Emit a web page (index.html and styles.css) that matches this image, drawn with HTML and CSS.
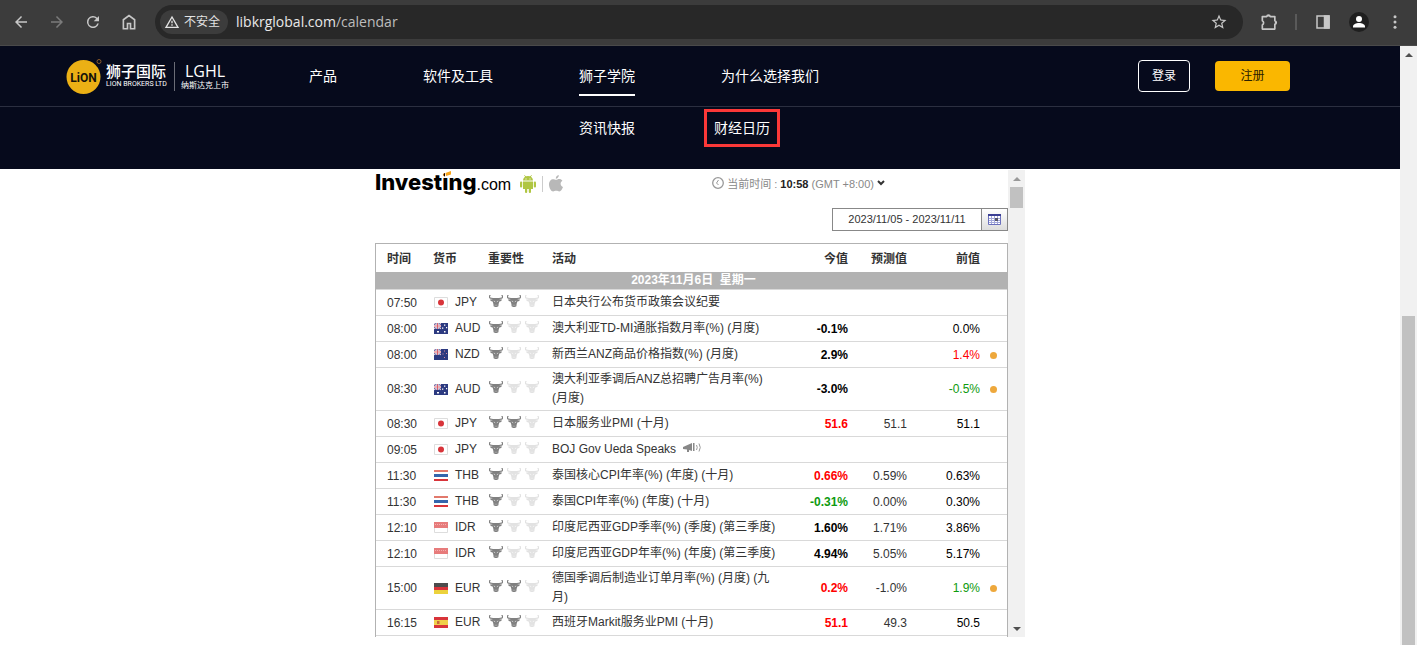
FILE: index.html
```html
<!DOCTYPE html>
<html lang="zh-CN">
<head>
<meta charset="utf-8">
<title>财经日历</title>
<link rel="stylesheet" href="styles.css">
</head>
<body>
<svg class="sprite" aria-hidden="true">
  <symbol id="bull" viewBox="0 0 14 12">
    <path d="M1.300 0C.2 1 0 2.600 1.300 3.200L4 3.500h6l2.700-.3C14 2.600 13.800 1 12.700 0" fill="none" stroke="currentColor" stroke-width="1.200"/>
    <path d="M4 3h6l.6 1.200 2.400.3-.8 1.500-1.800.5-.8 2.500-.2 2.200c-.9 1-3.900 1-4.800 0L4.400 9l-.8-2.500L1.800 6 1 4.500l2.400-.3z" fill="currentColor"/>
    <path d="M4.800 6l1.400.8M9.200 6l-1.400.8M5.800 10.200h.7M7.500 10.200h.7" stroke="#fff" stroke-width=".6" fill="none"/>
  </symbol>
  <symbol id="jpy" viewBox="0 0 16 11">
    <path d="M1.500.5h13v10h-13z" fill="#fff" stroke="#ddd"/><circle cx="8" cy="5.500" r="3" fill="#d8343a"/>
  </symbol>
  <symbol id="aud" viewBox="0 0 16 11">
    <path d="M1 0h14v11H1z" fill="#2c3a80"/><path d="M1 0h7v6H1z" fill="#6a74ad"/>
    <path d="M1 0l7 6M8 0L1 6" stroke="#e9c6d2"/><path d="M4.500 0v6M1 3h7" stroke="#fff" stroke-width="2"/><path d="M4.500 0v6M1 3h7" stroke="#d9606c"/>
    <path d="M4 8h2v1.500H4zM11 1.500h1.300v1.300H11zM9 4.500h1.300v1.300H9zM13 4h1.200v1.200H13zM11 8h1.500v1.500H11z" fill="#fff"/>
  </symbol>
  <symbol id="nzd" viewBox="0 0 16 11">
    <path d="M1 0h14v11H1z" fill="#2c3a80"/><path d="M1 0h7v6H1z" fill="#6a74ad"/>
    <path d="M1 0l7 6M8 0L1 6" stroke="#e9c6d2"/><path d="M4.500 0v6M1 3h7" stroke="#fff" stroke-width="2"/><path d="M4.500 0v6M1 3h7" stroke="#d9606c"/>
    <path d="M11 1.500h1v1h-1zM9.500 4.500h1v1h-1zM13 4h1v1h-1zM11 8h1v1h-1z" fill="#d98b9c"/>
  </symbol>
  <symbol id="thb" viewBox="0 0 16 11">
    <path d="M1 0h14v11H1z" fill="#fff"/><path d="M1 0h14v2H1z" fill="#e2796c"/><path d="M1 4h14v3H1z" fill="#3466ad"/><path d="M1 9h14v2H1z" fill="#d8343a"/>
  </symbol>
  <symbol id="idr" viewBox="0 0 16 11">
    <path d="M1.500.5h13v10h-13z" fill="#fff" stroke="#ddd"/><path d="M1 0h14v6H1z" fill="#e77b7b"/><path d="M2 2.500h12" stroke="#f3b0b0" stroke-dasharray="1 1"/>
  </symbol>
  <symbol id="deu" viewBox="0 0 16 11">
    <path d="M1 0h14v4H1z" fill="#4c4c4c"/><path d="M1 4h14v3H1z" fill="#d8343a"/><path d="M1 7h14v4H1z" fill="#ecd23c"/>
  </symbol>
  <symbol id="esp" viewBox="0 0 16 11">
    <path d="M1 0h14v11H1z" fill="#d8343a"/><path d="M1 3h14v5H1z" fill="#f0d04a"/><path d="M4 4h2.500v3H4z" fill="#c9683c"/>
  </symbol>
</svg>

<header class="toolbar">
  <button class="tool" aria-label="后退"><svg viewBox="0 0 24 24"><path d="M20 11H7.800l5.600-5.600L12 4l-8 8 8 8 1.400-1.400L7.800 13H20z"/></svg></button>
  <button class="tool dim" aria-label="前进" disabled><svg viewBox="0 0 24 24"><path d="M12 4l-1.400 1.400 5.600 5.600H4v2h12.200l-5.600 5.600L12 20l8-8z"/></svg></button>
  <button class="tool" aria-label="重新加载"><svg viewBox="0 0 24 24"><path d="M17.650 6.350A8 8 0 1 0 19.730 14h-2.080A6 6 0 1 1 12 6c1.660 0 3.140.69 4.220 1.780L13 11h7V4z"/></svg></button>
  <button class="tool" aria-label="主页"><svg viewBox="0 0 24 24"><path d="M4.500 9L12 3.500 19.500 9v12H14v-7h-4v7H4.500z" fill="none" stroke="currentColor" stroke-width="2.200"/></svg></button>
  <div class="omnibox">
    <button class="chip"><svg viewBox="0 0 24 24"><path d="M12 4.500L3 20h18z" fill="none" stroke="currentColor" stroke-width="2"/><path d="M11 10h2v4h-2zM11 15.500h2v2h-2z"/></svg>不安全</button>
    <div class="url" aria-label="地址">libkrglobal.com<span class="path">/calendar</span></div>
    <button class="star" aria-label="收藏"><svg viewBox="0 0 24 24"><path d="M22 9.240l-7.190-.62L12 2 9.190 8.630 2 9.240l5.460 4.730L5.820 21 12 17.270 18.180 21l-1.630-7.030zM12 15.400l-3.760 2.270 1-4.280-3.320-2.880 4.380-.38L12 6.100l1.710 4.040 4.380.38-3.320 2.880 1 4.280z"/></svg></button>
  </div>
  <button class="tool big" aria-label="扩展程序"><svg viewBox="0 0 24 24"><path d="M4 5.500h5.200a2.200 2.200 0 0 1 4.300 0H19v5a2.200 2.200 0 0 1 0 4.300V20.500H4v-5a2.800 2.800 0 0 0 0-5z" fill="none" stroke="currentColor" stroke-width="2" stroke-linejoin="round"/><path d="M9.500 5.500a1.900 1.900 0 0 1 3.800 0zM19 10.600a1.900 1.900 0 0 1 0 3.800z"/></svg></button>
  <span class="divider"></span>
  <button class="tool" aria-label="侧边栏"><svg viewBox="0 0 24 24"><path d="M4 4h16v16H4z" fill="none" stroke="currentColor" stroke-width="2"/><path d="M13 3h8v18h-8z"/></svg></button>
  <button class="tool big" aria-label="用户"><svg viewBox="0 0 20 20"><circle cx="10" cy="10" r="10" fill="#1f1f1f"/><circle cx="10" cy="7" r="3" fill="#fff"/><path d="M4 15.500v-1c0-2 3-3.500 6-3.500s6 1.500 6 3.500v1z" fill="#fff"/></svg></button>
  <button class="tool" aria-label="菜单"><svg viewBox="0 0 24 24"><circle cx="12" cy="5" r="2"/><circle cx="12" cy="12" r="2"/><circle cx="12" cy="19" r="2"/></svg></button>
</header>

<div class="viewport">
  <div class="page">
    <div class="site-head">
      <div class="main-bar">
        <a class="brand" href="#">
          <svg class="coin" viewBox="0 0 36 36"><circle cx="17.500" cy="19" r="17" fill="#ebb015"/><text x="17.500" y="24" text-anchor="middle" class="coin-text">LiON</text><circle cx="33" cy="3.500" r="2" fill="none" stroke="#8a5a2a"/></svg>
          <span class="brand-name"><span class="brand-cn">狮子国际</span><span class="brand-en">LION BROKERS LTD</span></span>
          <span class="brand-side"><span class="ticker">LGHL</span><span class="listed">纳斯达克上市</span></span>
        </a>
        <nav class="nav">
          <a href="#">产品</a>
          <a href="#">软件及工具</a>
          <a href="#" class="active">狮子学院</a>
          <a href="#">为什么选择我们</a>
        </nav>
        <button class="login">登录</button>
        <button class="signup">注册</button>
      </div>
      <nav class="sub-bar">
        <a href="#">资讯快报</a>
        <a href="#" class="marked">财经日历</a>
      </nav>
    </div>

    <div class="widget">
      <div class="calendar">
        <div class="cal-head">
          <a class="inv" href="#"><span class="inv-name">Investing<svg class="leaf" viewBox="0 0 6 6"><path d="M0 0h6v6H0z" fill="#fff"/><path d="M.5 2L6 0v3.500L1 5z" fill="#f9a51a"/></svg></span><span class="inv-com">.com</span></a>
          <svg class="android" viewBox="0 0 16 18" fill="#b0c643"><path d="M3 5.500a5 4.500 0 0 1 10 0zM3 6.500h10V14H3z"/><path d="M4.500.3l1.500 2M11.500.3l-1.500 2" stroke="#b0c643"/><rect y="6.500" width="2.200" height="6" rx="1"/><rect x="13.800" y="6.500" width="2.200" height="6" rx="1"/><rect x="5" y="13" width="2.200" height="5" rx="1"/><rect x="8.800" y="13" width="2.200" height="5" rx="1"/><path d="M5.500 3.500h1v1h-1zM9.500 3.500h1v1h-1z" fill="#fff"/></svg>
          <span class="bar"></span>
          <svg class="apple" viewBox="0 0 14 17" fill="#b8b8b8"><path d="M9.800 0c.1 2-1.300 3.700-3 3.700C6.600 2 8 .3 9.800 0zM7 4.800c.9 0 1.800-.8 3.300-.8 1.200 0 2.400.6 3.100 1.700-2.700 1.600-2.200 5.200.6 6.300-.8 2-2 4.500-3.600 4.500-1.200 0-1.700-.7-3.200-.7s-2 .7-3.100.7C2.200 16.500 0 13 0 9.500 0 6.200 2 4.200 4 4.200c1.300 0 2.200.6 3 .6z"/></svg>
          <div class="clock">
            <svg viewBox="0 0 12 12" fill="none" stroke="#999"><circle cx="6" cy="6" r="5.300" stroke-width="1.300"/><path d="M6.500 3L4.500 6l2 2"/></svg>
            <span>当前时间 : <b>10:58</b> (GMT +8:00)</span>
            <svg class="chev" viewBox="0 0 8 6" fill="none" stroke="#333" stroke-width="2"><path d="M1 1l3 3 3-3"/></svg>
          </div>
        </div>
        <div class="range">
          <input type="text" aria-label="日期范围" value="2023/11/05 - 2023/11/11">
          <button aria-label="选择日期"><svg viewBox="0 0 13 11"><path d="M.5.5h12v10H.5z" fill="#fff" stroke="#6b70bd"/><path d="M0 0h13v2H0z" fill="#3b3f94"/><path d="M3.500 2v8M6.500 2v8M9.500 2v8M1 4.500h11M1 6.500h11M1 8.500h11" stroke="#a3a8da"/><path d="M7 4h3v3H7z" fill="#556"/></svg></button>
        </div>
        <div class="table-box">
          <table>
            <colgroup><col class="c-time"><col class="c-cur"><col class="c-imp"><col><col class="c-act"><col class="c-fore"><col class="c-prev"><col class="c-dot"></colgroup>
            <thead><tr><th class="time">时间</th><th class="cur">货币</th><th class="imp">重要性</th><th class="event">活动</th><th class="num">今值</th><th class="num">预测值</th><th class="num">前值</th><th></th></tr></thead>
            <tbody id="rows"><tr class="day"><td colspan="8">2023年11月6日 &nbsp;星期一</td></tr></tbody>
          </table>
        </div>
      </div>
      <div class="scroll inner"><svg class="arrow" viewBox="0 0 8 4"><path d="M0 4l4-4 4 4z" fill="#999"/></svg><span class="thumb"></span><svg class="arrow end" viewBox="0 0 8 4"><path d="M0 0l4 4 4-4z" fill="#505050"/></svg></div>
    </div>
  </div>
  <div class="scroll outer"><svg class="arrow" viewBox="0 0 8 4"><path d="M0 4l4-4 4 4z" fill="#505050"/></svg><span class="thumb"></span></div>
</div>
<script src="calendar.js"></script>
</body>
</html>
```
FILE: calendar.js
```js
// time, flag, currency, importance, event, actual, actual tone, forecast, previous, previous tone, revised
const events = [
  ["07:50", "jpy", "JPY", 2, "日本央行公布货币政策会议纪要", "", "", "", "", "", false],
  ["08:00", "aud", "AUD", 1, "澳大利亚TD-MI通胀指数月率(%) (月度)", "-0.1%", "", "", "0.0%", "", false],
  ["08:00", "nzd", "NZD", 1, "新西兰ANZ商品价格指数(%) (月度)", "2.9%", "", "", "1.4%", "down", true],
  ["08:30", "aud", "AUD", 1, "澳大利亚季调后ANZ总招聘广告月率(%) (月度)", "-3.0%", "", "", "-0.5%", "up", true],
  ["08:30", "jpy", "JPY", 2, "日本服务业PMI (十月)", "51.6", "down", "51.1", "51.1", "", false],
  ["09:05", "jpy", "JPY", 1, "BOJ Gov Ueda Speaks", "", "", "", "", "", false],
  ["11:30", "thb", "THB", 1, "泰国核心CPI年率(%) (年度) (十月)", "0.66%", "down", "0.59%", "0.63%", "", false],
  ["11:30", "thb", "THB", 1, "泰国CPI年率(%) (年度) (十月)", "-0.31%", "up", "0.00%", "0.30%", "", false],
  ["12:10", "idr", "IDR", 1, "印度尼西亚GDP季率(%) (季度) (第三季度)", "1.60%", "", "1.71%", "3.86%", "", false],
  ["12:10", "idr", "IDR", 1, "印度尼西亚GDP年率(%) (年度) (第三季度)", "4.94%", "", "5.05%", "5.17%", "", false],
  ["15:00", "deu", "EUR", 2, "德国季调后制造业订单月率(%) (月度) (九月)", "0.2%", "down", "-1.0%", "1.9%", "up", true],
  ["16:15", "esp", "EUR", 2, "西班牙Markit服务业PMI (十月)", "51.1", "down", "49.3", "50.5", "", false],
];

const horn = '<svg class="speaker" viewBox="0 0 18 11"><path d="M0 5l9-4v8L6 8v2H4V7.500L0 7zM10 1h1.500v8H10z" fill="#888"/><path d="M13.500 3q1.500 2.500 0 5M16 1.500q2.500 4 0 8" fill="none" stroke="#999"/></svg>';

document.getElementById("rows").insertAdjacentHTML("beforeend", events.map(
  ([time, flag, cur, level, name, act, actTone, fore, prev, prevTone, revised]) => `<tr>
    <td class="time">${time}</td>
    <td class="cur"><span class="pair"><svg class="flag"><use href="#${flag}"/></svg>${cur}</span></td>
    <td class="imp"><span class="bulls">${[1, 2, 3].map(n => `<svg class="bull${n <= level ? " on" : ""}"><use href="#bull"/></svg>`).join("")}</span></td>
    <td class="event">${name}${name.startsWith("BOJ") ? horn : ""}</td>
    <td class="num actual ${actTone}">${act}</td>
    <td class="num forecast">${fore}</td>
    <td class="num ${prevTone}">${prev}</td>
    <td class="rev">${revised ? '<span class="dot"></span>' : ""}</td>
  </tr>`).join(""));
```
FILE: styles.css
```css
* { box-sizing: border-box; }
body { margin: 0; height: 100vh; display: flex; flex-direction: column; overflow: hidden; background: #fff; font-family: "Liberation Sans", "Noto Sans CJK SC", sans-serif; font-size: 12px; color: #333; }
button { border: 0; padding: 0; background: none; color: inherit; font: inherit; }
a { color: inherit; text-decoration: none; }
.sprite { display: none; }

.toolbar { display: flex; align-items: center; flex: none; height: 46px; padding: 0 4px 2px 3px; background: #3c3c3c; border-bottom: 1px solid #4a4a4a; color: #c7c7c7; }
.tool { display: grid; place-items: center; width: 36px; height: 36px; flex: none; }
.tool svg { width: 18px; height: 18px; fill: currentColor; }
.tool.dim { color: #7b7b7b; }
.tool.big svg { width: 20px; height: 20px; }
.divider { width: 2px; height: 16px; margin: 0 8px; background: #5a5a5a; }
.omnibox { flex: 1; display: flex; align-items: center; height: 34px; margin: 0 8px; padding: 0 15px 0 5px; border-radius: 17px; background: #282828; }
.chip { display: flex; align-items: center; gap: 4px; height: 24px; padding: 0 8px 0 4px; border-radius: 12px; background: #3c3c3c; color: #e3e3e3; font-size: 12px; line-height: 24px; }
.chip svg { width: 16px; height: 16px; fill: currentColor; }
.url { flex: 1; padding-left: 8px; font-family: "Open Sans", sans-serif; font-size: 14px; color: #e8e8e8; }
.path { color: #bdbdbd; }
.star { display: grid; }
.star svg { width: 18px; height: 18px; fill: currentColor; }

.viewport { flex: 1; display: flex; min-height: 0; }
.page { flex: 1; display: flex; flex-direction: column; min-width: 0; }
.site-head { flex: none; background: #060a1c; color: #fff; font-size: 14px; line-height: 20px; }
.main-bar { display: flex; align-items: center; height: 61px; padding: 0 110px 0 66px; border-bottom: 1px solid #2b2f40; }
.brand { display: flex; align-items: center; width: 163px; flex: none; }
.coin { width: 36px; height: 36px; margin-right: 4px; }
.coin-text { font-family: "Liberation Sans Narrow", Roboto, sans-serif; font-size: 12px; font-weight: bold; fill: #17130a; }
.brand-name { display: flex; flex-direction: column; width: 68px; }
.brand-cn { font-size: 15px; font-weight: 500; line-height: 17px; }
.brand-en { font-family: Roboto, sans-serif; font-size: 7px; line-height: 9px; white-space: nowrap; }
.brand-side { display: flex; flex-direction: column; align-items: center; width: 55px; padding-left: 6px; border-left: 1px solid #6a6c76; }
.ticker { font-family: "Open Sans", sans-serif; font-size: 16px; line-height: 18px; }
.listed { font-size: 8px; line-height: 11px; white-space: nowrap; }
.nav { flex: 1; display: flex; gap: 86px; margin-left: 80px; white-space: nowrap; }
.nav a { padding: 10px 0 8px; border-bottom: 2px solid transparent; }
.nav .active { border-color: #fff; }
.login { width: 52px; height: 32px; margin-right: 25px; border: 1px solid #fff; border-radius: 4px; font-size: 12px; }
.signup { width: 75px; height: 30px; border-radius: 4px; background: #fab700; color: #2a2000; font-size: 12px; }
.sub-bar { display: flex; align-items: flex-start; gap: 69px; height: 62px; padding: 2px 0 0 579px; white-space: nowrap; }
.sub-bar a { padding: 9px 0; }
.sub-bar .marked { padding: 6px 7px; border: 3px solid #fb3838; }

.widget { flex: 1; display: flex; min-height: 0; width: 650px; max-width: 100%; margin: 0 auto 8px; }
.calendar { flex: 1; display: flex; flex-direction: column; min-height: 0; overflow: hidden; }
.cal-head { display: flex; align-items: center; flex: none; height: 29px; }
.inv { display: flex; align-items: baseline; padding-bottom: 3px; color: #000; }
.inv-name { position: relative; font-family: Inter, sans-serif; font-size: 22px; font-weight: 800; line-height: 24px; }
.leaf { position: absolute; left: 70px; top: 1px; width: 6px; height: 6px; }
.inv-com { font-family: "Liberation Sans", sans-serif; font-size: 16px; }
.android { width: 16px; height: 18px; margin-left: 9px; }
.bar { width: 1px; height: 16px; margin: 0 6px; background: #ccc; }
.apple { width: 14px; height: 17px; }
.clock { display: flex; align-items: center; gap: 3px; margin-left: auto; margin-right: 123px; padding-bottom: 2px; color: #888; font-size: 11px; white-space: nowrap; }
.clock b { color: #222; }
.clock svg { width: 12px; height: 12px; }
.clock .chev { width: 8px; height: 6px; }
.range { display: flex; flex: none; align-self: flex-end; height: 23px; margin: 10px 0 12px; }
.range input { width: 150px; border: 1px solid #888; padding: 0 0 2px; text-align: center; color: #333; font: 11px "Liberation Sans", sans-serif; }
.range button { display: grid; place-items: center; width: 26px; border: 1px solid #888; border-left: 0; background: linear-gradient(#fff, #ddd); }
.range svg { width: 13px; height: 11px; }

.table-box { flex: 1; min-height: 0; border: 1px solid #b2b2b2; border-bottom: 0; overflow: hidden; }
table { width: 100%; table-layout: fixed; border-collapse: separate; border-spacing: 0; line-height: 19px; }
.c-time { width: 47px; }
.c-cur { width: 55px; }
.c-imp { width: 63px; }
.c-act { width: 66px; }
.c-fore { width: 59px; }
.c-prev { width: 73px; }
.c-dot { width: 27px; }
th { height: 28px; padding: 2px 0 0; text-align: left; color: #333; white-space: nowrap; }
td { height: 26px; padding: 1px 0 0; border-bottom: 1px solid #d9d9d9; }
.time { padding-left: 11px; }
.cur, .imp { padding-left: 10px; }
td.imp { padding-top: 0; padding-bottom: 4px; }
td.cur { padding-top: 0; padding-bottom: 0; }
.event { padding-left: 11px; }
td.event { padding-top: 2px; padding-bottom: 2px; padding-right: 4px; }
.num { text-align: right; color: #000; }
th.num { color: #333; }
.forecast { color: #333; }
.actual { font-weight: bold; }
.down { color: #f00; }
.up { color: #0e9a0e; }
.day td { height: 18px; padding: 0 0 0 4px; background: #b2b2b2; color: #fff; font-weight: bold; text-align: center; line-height: 17px; }
.pair { display: flex; align-items: center; gap: 6px; white-space: nowrap; }
.flag { width: 16px; height: 11px; flex: none; }
.bulls { display: flex; gap: 4px; padding-left: 1px; }
.bull { width: 14px; height: 12px; color: #e2e2e2; }
.bull.on { color: #808080; }
.speaker { width: 18px; height: 11px; margin-left: 7px; }
.dot { display: block; width: 7px; height: 7px; margin-left: 10px; border-radius: 50%; background: #eea83c; }

.scroll { display: flex; flex-direction: column; align-items: center; width: 17px; flex: none; background: #f1f1f1; }
.arrow { width: 8px; height: 4px; margin: 7px 0 6px; flex: none; }
.arrow.end { margin-top: auto; }
.thumb { width: 13px; background: #c1c1c1; }
.inner { margin-top: 1px; }
.inner .thumb { height: 21px; }
.outer .thumb { flex: none; height: 55%; margin-top: auto; }
```
